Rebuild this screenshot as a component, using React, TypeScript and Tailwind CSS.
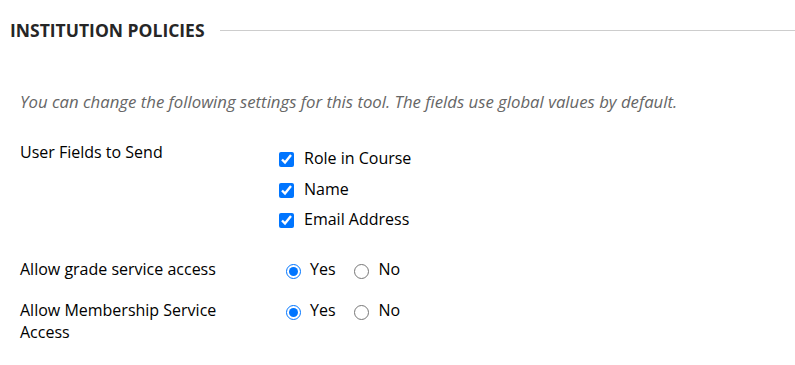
export default function App() {
  const font = { fontFamily: '"Open Sans", sans-serif' };
  return (
    <div className="w-[795px] h-[365px] bg-white text-[#262626]" style={font}>
      <div className="flex items-center pl-[10px] pt-[17px]">
        <h2 className="text-[17.5px] font-bold text-[#262626] leading-[26px]">INSTITUTION POLICIES</h2>
        <div className="flex-1 ml-[15px] h-px bg-[#cdcdcd]" />
      </div>
      <p className="pl-[20px] mt-[47px] text-[16.75px] italic text-[#666666] leading-[24px]">
        You can change the following settings for this tool. The fields use global values by default.
      </p>
      <div className="pl-[20px] mt-[27px] text-[16px] leading-[22px] text-black">
        <div className="flex">
          <div className="w-[259px]">User Fields to Send</div>
          <div className="flex flex-col gap-[8.5px] pt-[6px]">
            {["Role in Course", "Name", "Email Address"].map((t) => (
              <label key={t} className="flex items-center">
                <input type="checkbox" defaultChecked className="m-0 w-[15px] h-[15px] mr-[10px] mt-[3px]" />
                <span>{t}</span>
              </label>
            ))}
          </div>
        </div>
        <div className="flex mt-[28px]">
          <div className="w-[266px]">Allow grade service access</div>
          <Radios name="g" />
        </div>
        <div className="flex mt-[19px]">
          <div className="w-[230px] mr-[36px]">Allow Membership Service Access</div>
          <Radios name="m" />
        </div>
      </div>
    </div>
  );
}

function Radios({ name }: { name: string }) {
  return (
    <div className="flex items-start h-[22px]">
      <label className="flex items-start">
        <input type="radio" name={name} defaultChecked className="m-0 w-[15px] h-[15px] mr-[9px] mt-[6px]" />
        <span>Yes</span>
      </label>
      <label className="flex items-start ml-[18px]">
        <input type="radio" name={name} className="m-0 w-[15px] h-[15px] mr-[10px] mt-[6px]" />
        <span>No</span>
      </label>
    </div>
  );
}
